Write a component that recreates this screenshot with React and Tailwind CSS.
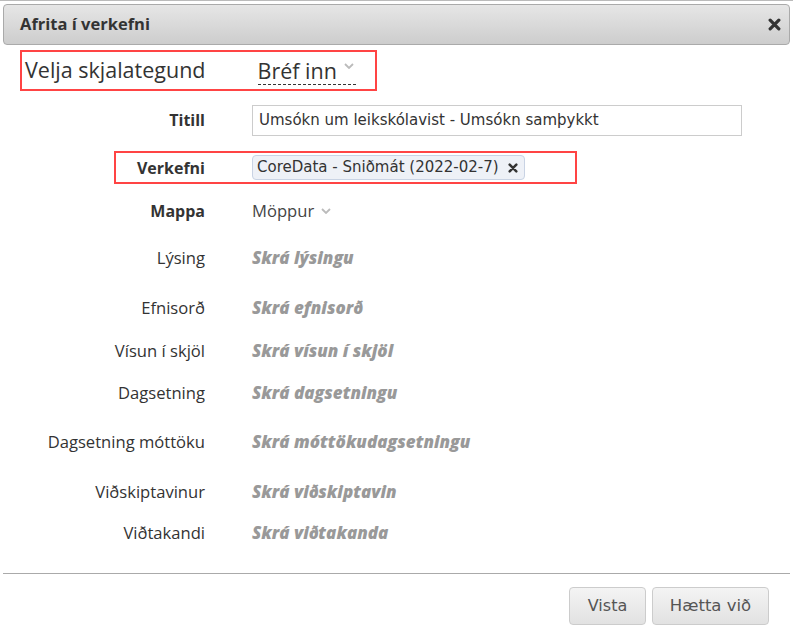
import React from 'react'

const sans = "font-['Open_Sans',sans-serif]"
const verdana = "font-['DejaVu_Sans','Verdana',sans-serif]"

const Chevron = ({ className = '' }) => (
  <svg viewBox="0 0 10 6" className={`w-[10px] h-[6px] ${className}`} fill="none">
    <path d="M1 1l4 4 4-4" stroke="#bbb" strokeWidth="1.8" />
  </svg>
)

const Times = ({ className = '' }) => (
  <svg viewBox="0 0 12 12" className={className} fill="none">
    <path d="M2 2l8 8M10 2l-8 8" stroke="currentColor" strokeWidth="3" strokeLinecap="round" />
  </svg>
)

const fields = [
  { label: 'Lýsing', placeholder: 'Skrá lýsingu', h: 'h-[40px]' },
  { label: 'Efnisorð', placeholder: 'Skrá efnisorð', h: 'h-[60px]' },
  { label: 'Vísun í skjöl', placeholder: 'Skrá vísun í skjöl', h: 'h-[26px]' },
  { label: 'Dagsetning', placeholder: 'Skrá dagsetningu', h: 'h-[58px]' },
  { label: 'Dagsetning móttöku', placeholder: 'Skrá móttökudagsetningu', h: 'h-[40px]' },
  { label: 'Viðskiptavinur', placeholder: 'Skrá viðskiptavin', h: 'h-[60px]' },
  { label: 'Viðtakandi', placeholder: 'Skrá viðtakanda', h: 'h-[22px]' },
]

export default function App() {
  return (
    <div className={`w-[793px] h-[637px] bg-white border-t border-[#bbb] overflow-hidden ${sans}`}>
      {/* Header */}
      <div className="mx-[3px] mt-[3px] h-[41px] flex items-center justify-between rounded-[4px] border border-[#aaa] bg-gradient-to-b from-[#e6e6e6] to-[#cdcdcd] pl-[16px] pr-[8px]">
        <span className="text-[16.5px] font-bold text-[#333]">Afrita í verkefni</span>
        <Times className="w-[13px] h-[13px] text-[#333]" />
      </div>

      {/* Document type */}
      <div className="ml-[20px] mt-[5px] w-[357px] h-[41px] border-2 border-[#f44] flex items-center">
        <span className="ml-[3px] text-[21.5px] text-[#333]">Velja skjalategund</span>
        <span className="ml-[52px] flex items-center border-b border-dashed border-[#333] leading-[27px]">
          <span className="text-[21.5px] text-[#333]">Bréf inn</span>
          <Chevron className="ml-[7px] mr-[2px] mb-[8px]" />
        </span>
      </div>

      {/* Titill */}
      <div className="mt-[6px] h-[46px] flex items-center">
        <span className="w-[205px] text-right text-[16px] font-bold text-[#333]">Titill</span>
        <div className={`ml-[47px] w-[490px] h-[31px] border border-[#ccc] flex items-center px-[6px] text-[15px] text-[#333] ${verdana}`}>
          Umsókn um leikskólavist - Umsókn samþykkt
        </div>
      </div>

      {/* Verkefni */}
      <div className="mt-[8px] ml-[114px] w-[463px] h-[33px] border-2 border-[#f44] flex items-center">
        <span className="w-[89px] text-right text-[16px] font-bold text-[#333]">Verkefni</span>
        <div className={`ml-[47px] h-[25px] flex items-center rounded-[4px] border border-[#c9d3e4] bg-[#eef1f7] pl-[4px] pr-[6px] text-[15px] text-[#333] ${verdana}`}>
          CoreData - Sniðmát (2022-02-7)
          <Times className="ml-[9px] w-[10px] h-[10px] text-[#333]" />
        </div>
      </div>

      {/* Mappa */}
      <div className="h-[54px] flex items-center">
        <span className="w-[205px] text-right text-[16px] font-bold text-[#333]">Mappa</span>
        <span className="ml-[47px] flex items-center text-[16.6px] text-[#444]">
          Möppur
          <Chevron className="ml-[7px]" />
        </span>
      </div>

      {fields.map(f => (
        <div key={f.label} className={`${f.h} flex items-center`}>
          <span className="w-[205px] text-right text-[16.6px] text-[#333]">{f.label}</span>
          <span className="ml-[47px] text-[17px] font-extrabold italic text-[#999]">{f.placeholder}</span>
        </div>
      ))}

      {/* Footer */}
      <div className="mt-[29px] mx-[3px] border-t border-[#aaa]" />
      <div className={`mt-[13px] flex justify-end gap-[6px] pr-[24px] ${verdana}`}>
        <button className="w-[77px] h-[38px] rounded-[4px] border border-[#ccc] bg-gradient-to-b from-[#f4f4f4] to-[#e2e2e2] text-[16px] text-[#555]">
          Vista
        </button>
        <button className="w-[117px] h-[38px] rounded-[4px] border border-[#ccc] bg-gradient-to-b from-[#f4f4f4] to-[#e2e2e2] text-[16.5px] text-[#555]">
          Hætta við
        </button>
      </div>
    </div>
  )
}
